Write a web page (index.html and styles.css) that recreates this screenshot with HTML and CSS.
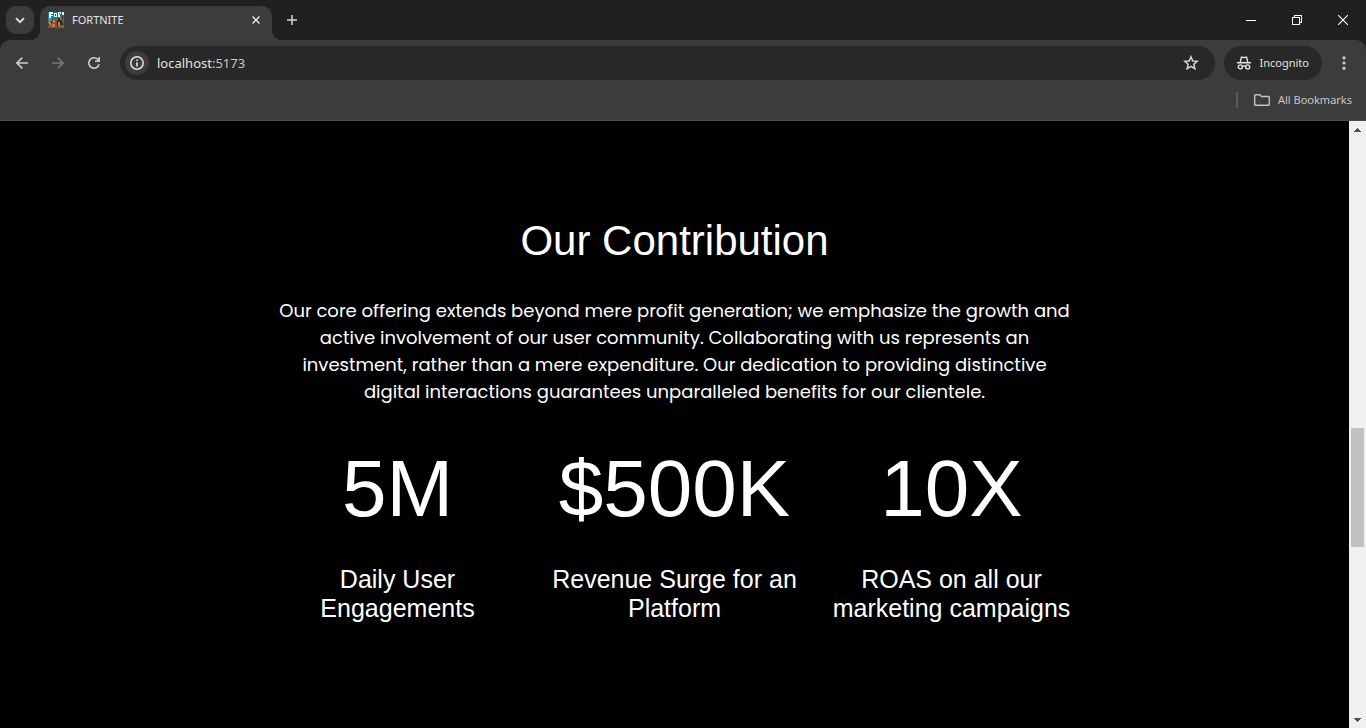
FILE: index.html
```html
<!DOCTYPE html>
<html lang="en">
<head>
<meta charset="utf-8">
<title>FORTNITE</title>
<link rel="stylesheet" href="styles.css">
</head>
<body class="window">
<header class="chrome">
  <div class="tab-strip">
    <button class="tab-search" aria-label="Search tabs">
      <svg width="10" height="7" viewBox="0 0 10 7" fill="none" stroke="#e3e3e3" stroke-width="1.8"><path d="M1 1.2l4 4 4-4"/></svg>
    </button>
    <div class="tab">
      <svg class="favicon" width="16" height="16" viewBox="0 0 16 16" shape-rendering="crispEdges">
        <rect width="16" height="16" fill="#785238"/>
        <rect width="16" height="7" fill="#137f86"/>
        <rect x="0" y="6" width="4" height="4" fill="#37969a"/>
        <path fill="#e9f6f5" d="M1 0h4v2h-2v1h2v1h-2v2h-2zM6 1h3v4h-3zM10 0h3v2h-1v3h-2zM14 0h2v3h-2z"/>
        <path fill="#175f66" d="M7 2h1v2h-1zM11 1h1v1h-1z"/>
        <path fill="#2c2924" d="M10 6h2v2h2v3h1v2h-3v-2h-2v3h-1v-5h1zM3 9h1v2h-1zM0 12h1v1h-1zM14 3h1v4h-1z"/>
        <path fill="#c47a47" d="M1 10h2v3h-2zM5 8h2v3h-2zM4 12h3v3h-3zM10 10h2v4h-2zM12 5h1v3h-1z"/>
        <path fill="#b0452f" d="M2 14h2v2h-2zM8 14h2v1h-2zM14 7h1v3h-1z"/>
        <path fill="#5d7056" d="M0 9h1v2h-1zM12 13h4v3h-4z"/>
      </svg>
      <span class="tab-title">FORTNITE</span>
      <button class="tab-close" aria-label="Close tab">
        <svg width="8" height="8" viewBox="0 0 8 8" fill="none" stroke="#e3e3e3" stroke-width="1.5"><path d="M.5.5l7 7M7.500.5l-7 7"/></svg>
      </button>
    </div>
    <button class="new-tab" aria-label="New tab">
      <svg width="10" height="10" viewBox="0 0 10 10" fill="none" stroke="#d5d5d5" stroke-width="1.5"><path d="M5 0v10M0 5h10"/></svg>
    </button>
    <div class="window-controls">
      <button aria-label="Minimize"><svg width="10" height="10" viewBox="0 0 10 10" shape-rendering="crispEdges"><path fill="#fff" d="M0 5h10v1H0z"/></svg></button>
      <button aria-label="Restore"><svg width="10" height="10" viewBox="0 0 10 10" fill="none" stroke="#fff" shape-rendering="crispEdges"><path d="M.5 2.500h7v7h-7zM2.500 2.500v-2h7v7h-2"/></svg></button>
      <button aria-label="Close"><svg width="10" height="10" viewBox="0 0 10 10" fill="none" stroke="#fff" stroke-width="1.1"><path d="M0 0l10 10M10 0L0 10"/></svg></button>
    </div>
  </div>
  <div class="toolbar">
    <nav class="history">
      <button aria-label="Back"><svg width="12" height="12" viewBox="0 0 12 12" fill="none" stroke="#cfcfcf" stroke-width="1.6"><path d="M12 6H1.200M6.300.6L.9 6l5.400 5.400"/></svg></button>
      <button aria-label="Forward"><svg width="12" height="12" viewBox="0 0 12 12" fill="none" stroke="#777" stroke-width="1.6"><path d="M0 6h10.800M5.700.6L11.100 6l-5.400 5.400"/></svg></button>
      <button aria-label="Reload"><svg width="12" height="12" viewBox="0 0 12 12" fill="none" stroke="#cfcfcf" stroke-width="1.6"><path d="M10.500 3.300A5.200 5.200 0 1 0 11.100 7.200M11.200 0v4.200H7"/></svg></button>
    </nav>
    <div class="omnibox">
      <button class="site-info" aria-label="View site information">
        <svg width="14" height="14" viewBox="0 0 14 14"><circle cx="7" cy="7" r="6.200" fill="none" stroke="#e3e3e3" stroke-width="1.500"/><path fill="#e3e3e3" d="M6.200 6.200h1.600v4.300H6.200zM6.200 3.500h1.600v1.600H6.200z"/></svg>
      </button>
      <div class="address" role="textbox" aria-label="Address" contenteditable="true" spellcheck="false">localhost<span class="port">:5173</span></div>
      <button class="star" aria-label="Bookmark this tab">
        <svg width="16" height="16" viewBox="0 0 16 16" fill="none" stroke="#d5d5d5" stroke-width="1.5" stroke-linejoin="miter"><path d="M8 1.800l1.750 4.150 4.500.4-3.400 2.950 1 4.400L8 11.350 4.150 13.700l1-4.400-3.400-2.950 4.500-.4z"/></svg>
      </button>
    </div>
    <button class="incognito">
      <svg width="14" height="14" viewBox="0 0 14 14" fill="none" stroke="#e3e3e3" stroke-width="1.400"><path d="M0 6.700h14M3.200 6.500l1.200-5.300h1.100l1.500.5 1.500-.5h1.100l1.200 5.300M5.500 10.400q1.500-.8 3 0"/><circle cx="3.300" cy="10.900" r="2"/><circle cx="10.700" cy="10.900" r="2"/></svg>
      Incognito
    </button>
    <button class="menu" aria-label="Menu">
      <svg width="4" height="14" viewBox="0 0 4 14" fill="#cfcfcf"><circle cx="2" cy="1.800" r="1.600"/><circle cx="2" cy="7" r="1.600"/><circle cx="2" cy="12.200" r="1.600"/></svg>
    </button>
  </div>
  <div class="bookmarks">
    <button class="all-bookmarks">
      <svg width="16" height="12" viewBox="0 0 16 12" fill="none" stroke="#c4c4c4" stroke-width="1.400" stroke-linejoin="round"><path d="M.7 1.500q0-.8.8-.8h4.300l1.700 1.800h7q.8 0 .8.800v7.200q0 .8-.8.800h-13q-.8 0-.8-.8z"/></svg>
      All Bookmarks
    </button>
  </div>
</header>
<div class="viewport">
  <main class="page">
    <section class="contribution">
      <h1 class="heading">Our Contribution</h1>
      <p class="intro">Our core offering extends beyond mere profit generation; we emphasize the growth and active involvement of our user community. Collaborating with us represents an investment, rather than a mere expenditure. Our dedication to providing distinctive digital interactions guarantees unparalleled benefits for our clientele.</p>
      <div class="stats">
        <div class="stat"><h2 class="figure">5M</h2><p class="label">Daily User Engagements</p></div>
        <div class="stat"><h2 class="figure">$500K</h2><p class="label">Revenue Surge for an Platform</p></div>
        <div class="stat"><h2 class="figure">10X</h2><p class="label">ROAS on all our marketing campaigns</p></div>
      </div>
    </section>
  </main>
  <div class="scrollbar" aria-hidden="true">
    <div class="arrow"><svg width="7" height="4" viewBox="0 0 7 4" shape-rendering="crispEdges"><path fill="#505050" d="M3 0h1v1h1v1h1v1h1v1H0V3h1V2h1V1h1z"/></svg></div>
    <div class="track-before"></div>
    <div class="thumb"></div>
    <div class="track-after"></div>
    <div class="arrow"><svg width="7" height="4" viewBox="0 0 7 4" shape-rendering="crispEdges"><path fill="#505050" d="M0 0h7v1H6v1H5v1H4v1H3V3H2V2H1V1H0z"/></svg></div>
  </div>
</div>
</body>
</html>
```
FILE: styles.css
```css
* { box-sizing: border-box; margin: 0; }

button {
  display: flex;
  align-items: center;
  justify-content: center;
  flex: none;
  padding: 0;
  border: 0;
  background: none;
  color: inherit;
  font: inherit;
}

svg { display: block; flex: none; }

.window {
  display: flex;
  flex-direction: column;
  height: 100vh;
  overflow: hidden;
  background: #000;
  color: #fff;
}

.chrome {
  flex: none;
  background: #1f2120;
  border-bottom: 1px solid #4a4a4a;
  color: #e3e3e3;
  font: 11px/16px "Segoe UI", "Noto Sans", sans-serif;
}

.tab-strip {
  display: flex;
  align-items: center;
  height: 40px;
  padding-left: 6px;
}

.tab-search {
  width: 28px;
  height: 28px;
  border-radius: 10px;
  background: #3c3c3c;
}

.tab {
  position: relative;
  display: flex;
  align-items: center;
  align-self: flex-end;
  gap: 8px;
  width: 232px;
  height: 34px;
  margin-left: 6px;
  padding: 0 8px 6px;
  border-radius: 10px 10px 0 0;
  background: #3c3c3c;
}

.tab::before,
.tab::after {
  content: "";
  position: absolute;
  bottom: 0;
  width: 10px;
  height: 10px;
}

.tab::before {
  right: 100%;
  background: radial-gradient(circle at 0 0, transparent 10px, #3c3c3c 10px);
}

.tab::after {
  left: 100%;
  background: radial-gradient(circle at 100% 0, transparent 10px, #3c3c3c 10px);
}

.tab-title { flex: 1; }
.tab-close { width: 16px; height: 16px; }

.new-tab {
  width: 28px;
  height: 28px;
  margin-left: 6px;
}

.window-controls { display: flex; margin-left: auto; }
.window-controls button { width: 46px; height: 40px; }

.toolbar {
  display: flex;
  align-items: center;
  height: 46px;
  padding: 0 8px 0 4px;
  border-radius: 10px 10px 0 0;
  background: #3c3c3c;
}

.history { display: flex; }
.history button { width: 36px; height: 34px; }

.omnibox {
  display: flex;
  align-items: center;
  flex: 1;
  height: 34px;
  margin: 0 9px 0 8px;
  padding: 0 16px 0 5px;
  border-radius: 17px;
  background: #282828;
}

.site-info {
  width: 24px;
  height: 24px;
  border-radius: 12px;
  background: #3c3c3c;
}

.address {
  flex: 1;
  margin-left: 8px;
  font-size: 13px;
  line-height: 20px;
}

.port { color: #c7c7c7; }

.incognito {
  gap: 9px;
  height: 34px;
  padding: 0 13px;
  border-radius: 17px;
  background: #282828;
}

.menu { width: 28px; height: 28px; margin-left: 8px; }

.bookmarks {
  display: flex;
  justify-content: flex-end;
  height: 34px;
  padding: 6px 14px 12px 0;
  background: #3c3c3c;
}

.all-bookmarks {
  gap: 8px;
  padding-left: 16px;
  border-left: 2px solid #5c5c5c;
  color: #c7c7c7;
}

.viewport { display: flex; flex: 1; min-height: 0; }

.page {
  flex: 1;
  overflow: hidden;
  background: #000;
  font-family: Arial, "Liberation Sans", sans-serif;
  text-align: center;
}

.contribution {
  max-width: 831px;
  margin: 0 auto;
  padding-top: 96px;
}

.heading { font-size: 42px; font-weight: 400; line-height: 48px; }

.intro {
  margin-top: 32px;
  padding: 0 16px;
  font: 18px/27px Poppins, Inter, sans-serif;
}

.stats {
  display: grid;
  grid-template-columns: repeat(3, 1fr);
  margin-top: 38px;
}

.stat { padding: 0 16px; }
.figure { font-size: 80px; font-weight: 400; line-height: 92px; }
.label { margin-top: 30px; font-size: 25px; line-height: 29px; }

.scrollbar {
  display: flex;
  flex-direction: column;
  flex: none;
  width: 17px;
  background: #f0f0f0;
}

.arrow {
  display: flex;
  align-items: center;
  justify-content: center;
  height: 17px;
}

.track-before { flex: 290; }
.thumb { flex: 119; margin: 0 2px; background: #c1c1c1; }
.track-after { flex: 164; }
```
